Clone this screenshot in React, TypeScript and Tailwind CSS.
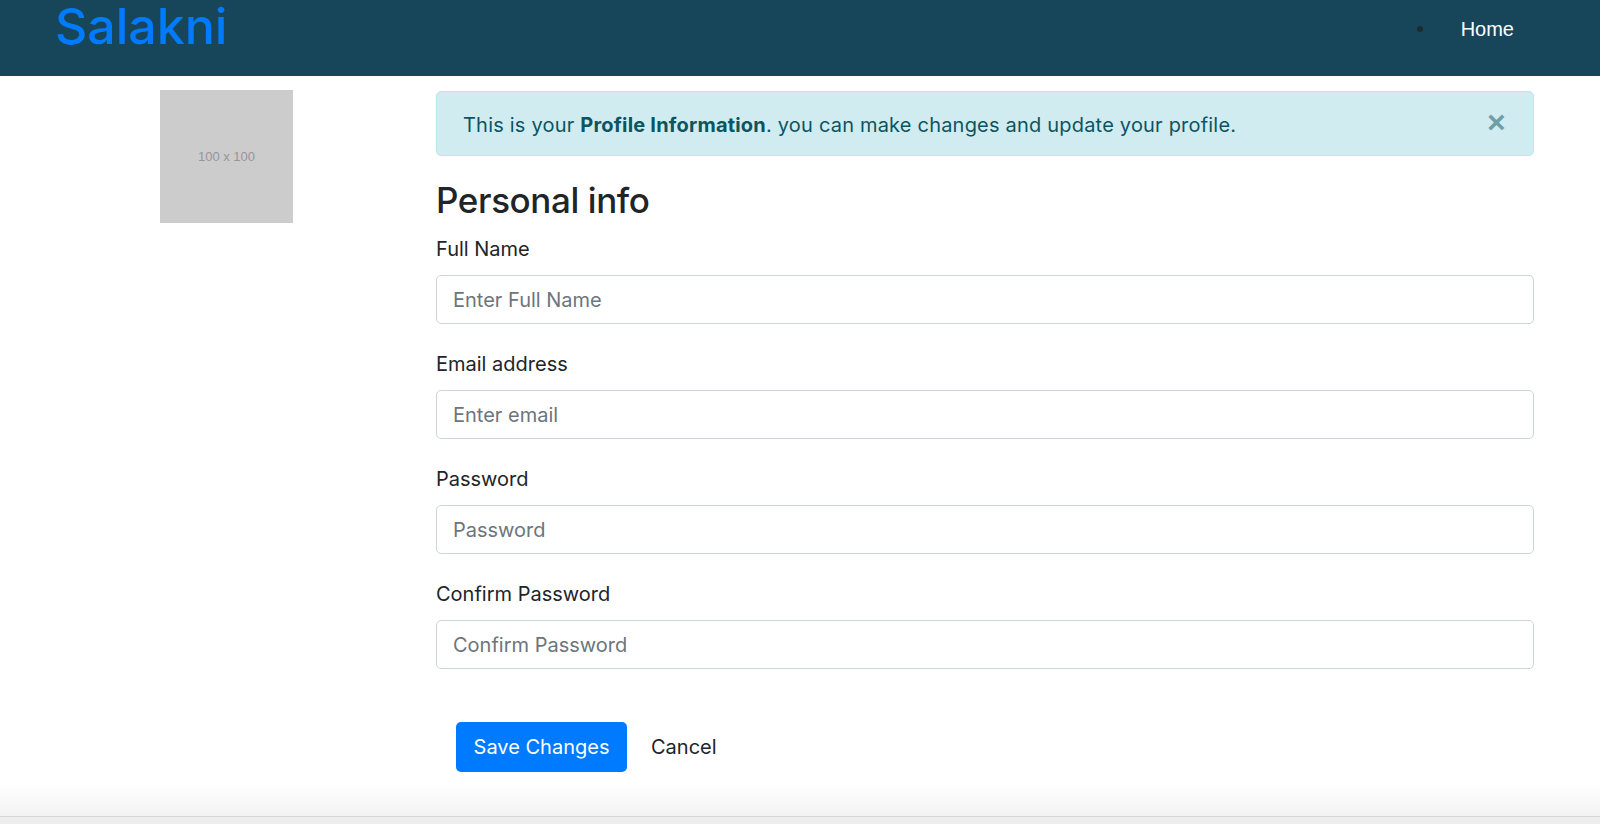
const fields = [
  { label: "Full Name", placeholder: "Enter Full Name", type: "text" },
  { label: "Email address", placeholder: "Enter email", type: "email" },
  { label: "Password", placeholder: "Password", type: "password" },
  { label: "Confirm Password", placeholder: "Confirm Password", type: "password" },
];

function Navbar() {
  return (
    <header className="h-[76px] bg-[#17465a] flex items-start justify-between">
      <a
        href="#"
        className="ml-[55px] mt-[2px] text-[50px] leading-[48px] font-medium text-[#007bff] font-['Inter',sans-serif]"
      >
        Salakni
      </a>
      <ul className="mt-[14px] mr-[86px] flex items-center">
        <li className="flex items-center">
          <span className="w-[6px] h-[6px] rounded-full bg-[#1e2a30] mr-[38px]" />
          <a
            href="#"
            className="text-white text-[20px] leading-[30px] font-['Liberation_Sans',Arial,sans-serif]"
          >
            Home
          </a>
        </li>
      </ul>
    </header>
  );
}

function Alert() {
  return (
    <div className="relative border border-[#bee5eb] bg-[#d1ecf1] text-[#0c5460] rounded-[5px] pt-[18px] pb-[14px] pl-[26px] pr-[60px] text-[20px] leading-[31px] tracking-[0.2px]">
      This is your <strong className="font-bold">Profile Information</strong>. you can
      make changes and update your profile.
      <button className="absolute right-[27px] top-[15px] text-[32px] leading-[30px] font-bold text-[#0c5460] opacity-50 font-['Liberation_Sans',Arial,sans-serif]">
        ×
      </button>
    </div>
  );
}

export default function App() {
  return (
    <div className="min-h-screen flex flex-col bg-white font-['Inter',sans-serif] text-[#212529]">
      <Navbar />
      <main className="flex">
        <div className="w-[436px] pl-[160px] pt-[14px] shrink-0">
          <div className="w-[133px] h-[133px] bg-[#cccccc] flex items-center justify-center">
            <span className="text-[13px] text-[#969696] font-['Liberation_Sans',Arial,sans-serif]">
              100 x 100
            </span>
          </div>
        </div>
        <div className="w-[1098px] pt-[15px]">
          <Alert />
          <h3 className="mt-[23px] mb-[13px] text-[35px] leading-[42px] font-medium tracking-[-0.4px]">
            Personal info
          </h3>
          <form onSubmit={(e) => e.preventDefault()}>
            {fields.map((f) => (
              <div key={f.label} className="mb-[25px]">
                <label className="block text-[20px] leading-[30px] mb-[11px]">{f.label}</label>
                <input
                  type={f.type}
                  placeholder={f.placeholder}
                  className="block w-full h-[49px] px-4 border border-[#ced4da] rounded-[5px] text-[20px] placeholder:text-[#6c757d] outline-none"
                />
              </div>
            ))}
            <div className="flex items-center mt-[53px] ml-[20px]">
              <button className="w-[171px] h-[50px] rounded-[5px] bg-[#007bff] text-white text-[20px]">
                Save Changes
              </button>
              <button type="button" className="ml-[24px] text-[20px] text-[#212529]">
                Cancel
              </button>
            </div>
          </form>
        </div>
      </main>
      <div className="flex-1" />
      <div className="h-[33px] bg-gradient-to-b from-white to-[#f3f3f3] border-b border-[#d6d6d6]" />
      <div className="h-[7px] bg-[#eeeeee]" />
    </div>
  );
}
